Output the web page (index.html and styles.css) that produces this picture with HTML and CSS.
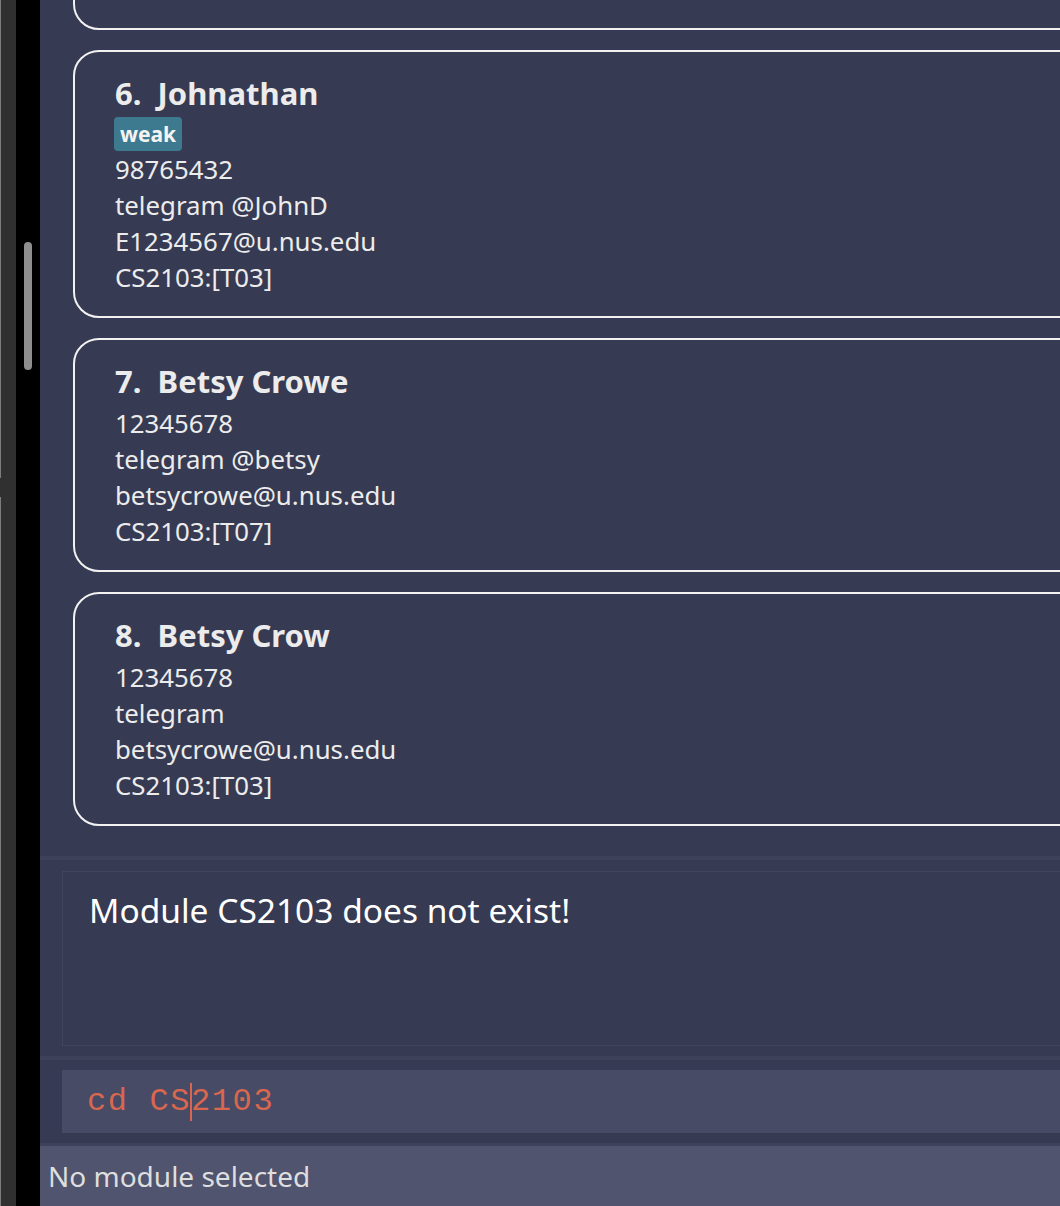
FILE: index.html
```html
<!DOCTYPE html>
<html>
<head>
<meta charset="utf-8">
<link rel="stylesheet" href="styles.css">
</head>
<body>
<div class="app">
  <div class="edge"></div>
  <div class="gutter"><div class="thumb"></div></div>
  <div class="main">
    <div class="list">
      <div class="card card-hidden"></div>
      <div class="card">
        <div class="name">6.&nbsp; Johnathan</div>
        <div class="tags"><span class="tag">weak</span></div>
        <div class="line">98765432</div>
        <div class="line">telegram @JohnD</div>
        <div class="line">E1234567@u.nus.edu</div>
        <div class="line">CS2103:[T03]</div>
      </div>
      <div class="card">
        <div class="name">7.&nbsp; Betsy Crowe</div>
        <div class="line">12345678</div>
        <div class="line">telegram @betsy</div>
        <div class="line">betsycrowe@u.nus.edu</div>
        <div class="line">CS2103:[T07]</div>
      </div>
      <div class="card">
        <div class="name">8.&nbsp; Betsy Crow</div>
        <div class="line">12345678</div>
        <div class="line">telegram</div>
        <div class="line">betsycrowe@u.nus.edu</div>
        <div class="line">CS2103:[T03]</div>
      </div>
    </div>
    <div class="band"></div>
    <div class="result-area">
      <div class="result">Module CS2103 does not exist!</div>
    </div>
    <div class="band"></div>
    <div class="command-area">
      <div class="command">cd CS<span class="caret"></span>2103</div>
    </div>
    <div class="band thin"></div>
    <div class="status">No module selected</div>
  </div>
</div>
</body>
</html>
```
FILE: styles.css
```css
html, body {
  margin: 0;
  padding: 0;
  width: 1060px;
  height: 1206px;
  overflow: hidden;
  background: #363a52;
}
.app {
  display: flex;
  height: 1206px;
  font-family: "Noto Sans", "Open Sans", sans-serif;
}
.edge {
  width: 16px;
  flex: none;
  background:
    linear-gradient(to bottom, #7d7d7d 0, #7d7d7d 478px, transparent 478px, transparent 497px, #7d7d7d 497px) left top / 1px 100% no-repeat,
    #303030;
}
.gutter {
  width: 24px;
  flex: none;
  background: #000;
  position: relative;
}
.thumb {
  position: absolute;
  left: 8px;
  top: 242px;
  width: 8px;
  height: 128px;
  border-radius: 4px;
  background: #8e8e8e;
}
.main {
  flex: 1;
  display: flex;
  flex-direction: column;
  min-width: 0;
}
.list {
  height: 856px;
  flex: none;
  overflow: hidden;
  display: flex;
  flex-direction: column;
  justify-content: flex-end;
  gap: 20px;
  padding: 0 0 30px 33px;
  box-sizing: border-box;
}
.card {
  flex: none;
  margin-right: -60px;
  border: 2px solid #f2f2f2;
  border-radius: 26px;
  padding: 21px 40px 21px 40px;
  color: #ececec;
}
.card-hidden {
  height: 190px;
}
.name {
  font-weight: 700;
  font-size: 31px;
  line-height: 40px;
  padding-bottom: 4px;
}
.tags {
  height: 34px;
  display: flex;
  align-items: stretch;
}
.tag {
  background: #3e7a8f;
  color: #f4f4f4;
  font-weight: 700;
  font-size: 21px;
  line-height: 34px;
  padding: 0 6px;
  border-radius: 4px;
  margin-left: -1px;
}
.line {
  font-size: 25.8px;
  line-height: 36px;
}
.band {
  height: 4px;
  flex: none;
  background: #3d4159;
}
.band.thin {
  height: 3px;
}
.result-area {
  flex: none;
  padding: 11px 0 10px 22px;
}
.result {
  border: 1px solid #40445d;
  border-right: none;
  color: #ffffff;
  font-size: 33.5px;
  line-height: 40px;
  padding: 18px 26px;
  box-sizing: border-box;
  height: 175px;
}
.command-area {
  flex: none;
  padding: 10px 0 10px 22px;
}
.command {
  height: 63px;
  background: #474b66;
  color: #d9674f;
  font-family: "Liberation Mono", "Courier New", monospace;
  font-size: 32px;
  letter-spacing: 1.6px;
  line-height: 63px;
  padding-left: 25px;
  display: flex;
  align-items: center;
}
.caret {
  display: inline-block;
  width: 2px;
  height: 38px;
  background: #d9674f;
  margin: 0 -1px 0 -1px;
}
.status {
  flex: 1;
  background: #50546f;
  color: #dedede;
  font-size: 28px;
  line-height: 60px;
  padding-left: 8px;
}
```
